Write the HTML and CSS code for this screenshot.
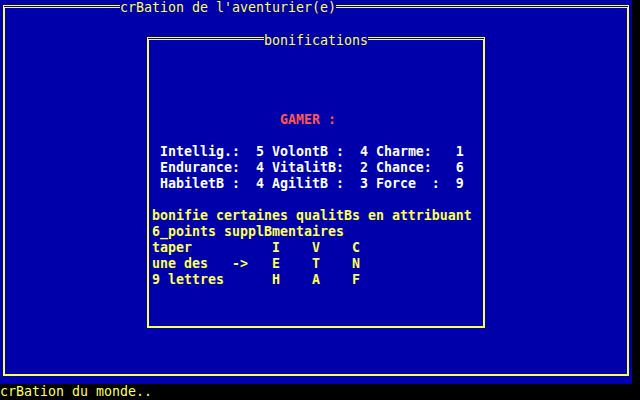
FILE: index.html
```html
<!DOCTYPE html>
<html lang="fr">

<head>
    <meta charset="UTF-8">
    <meta name="viewport" content="width=device-width, initial-scale=1.0">
    <title>crBation de l'aventurier(e)</title>
    <link rel="stylesheet" href="styles.css">
</head>

<body>
    <div class="screen">
        <div class="desktop">
            <div class="frame">
                <div class="frame-title">crBation de l'aventurier(e)</div>
                <div class="panel">
                    <div class="panel-title">bonifications</div>
                    <div class="panel-body">
                        <div class="gamer">GAMER :</div>
                        <div class="stats">
                            <div class="line">Intellig.:  5 VolontB :  4 Charme:   1</div>
                            <div class="line">Endurance:  4 VitalitB:  2 Chance:   6</div>
                            <div class="line">HabiletB :  4 AgilitB :  3 Force  :  9</div>
                        </div>
                        <div class="info">
                            <div class="line">bonifie certaines qualitBs en attribuant</div>
                            <div class="line">6_points supplBmentaires</div>
                            <div class="line">taper          I    V    C</div>
                            <div class="line">une des   ->   E    T    N</div>
                            <div class="line">9 lettres      H    A    F</div>
                        </div>
                    </div>
                </div>
            </div>
        </div>
        <div class="status">crBation du monde..</div>
    </div>
</body>

</html>
```

FILE: styles.css
```css
body {
    margin: 0;
    background-color: #000;
    font-family: "DejaVu Sans Mono", "Liberation Mono", monospace;
    font-size: 13.29px;
    line-height: 16px;
}

.screen {
    width: 640px;
    height: 400px;
    overflow: hidden;
    background-color: #000;
}

.desktop {
    width: 632px;
    height: 384px;
    box-sizing: border-box;
    padding: 5px 0 0 3px;
    background-color: #0000aa;
}

/* outer window: double line on top, single on the sides */
.frame {
    width: 626px;
    height: 371px;
    box-sizing: border-box;
    border-top: 3px double #ffff55;
    border-left: 2px solid #ffff55;
    border-right: 2px solid #ffff55;
    border-bottom: 2px solid #ffff55;
}

.frame-title {
    width: fit-content;
    margin: -8px 0 0 115px;
    background-color: #0000aa;
    color: #ffff55;
    white-space: pre;
}

.panel {
    width: 338px;
    height: 291px;
    box-sizing: border-box;
    margin: 21px 0 0 142px;
    border-top: 3px double #ffff55;
    border-left: 2px solid #ffff55;
    border-right: 2px solid #ffff55;
    border-bottom: 2px solid #ffff55;
}

.panel-title {
    width: fit-content;
    margin: -7px 0 0 115px;
    background-color: #0000aa;
    color: #ffff55;
    white-space: pre;
}

.panel-body {
    margin-top: 63px;
    padding-left: 3px;
    font-weight: bold;
}

.line {
    white-space: pre;
    height: 16px;
}

.gamer {
    padding-left: 128px;
    color: #ff5555;
    white-space: pre;
}

.stats {
    margin-top: 16px;
    padding-left: 8px;
    color: #fff;
}

.info {
    margin-top: 16px;
    color: #ffff55;
}

.status {
    height: 16px;
    color: #ffff55;
    white-space: pre;
}
```
